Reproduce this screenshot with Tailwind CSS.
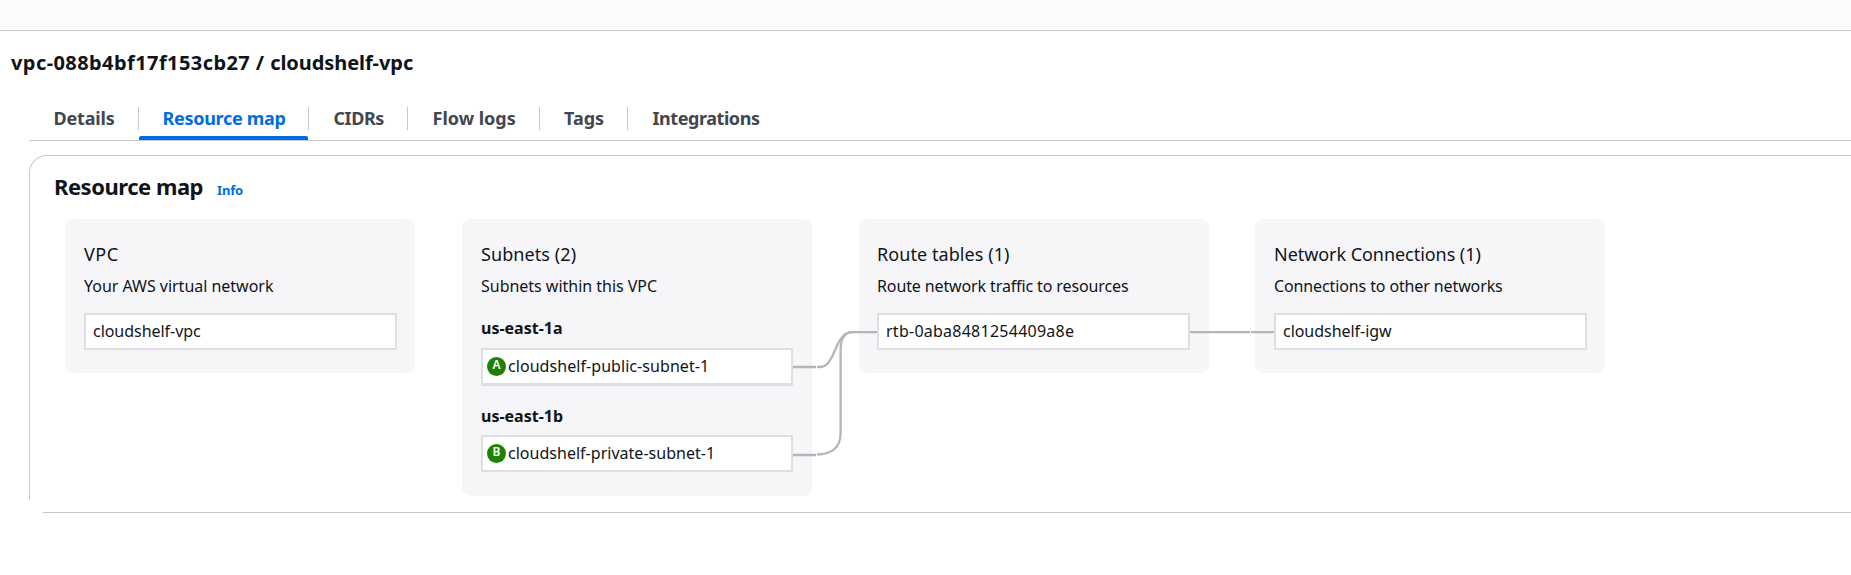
<!DOCTYPE html>
<html lang="en">
<head>
<meta charset="utf-8">
<title>VPC resource map</title>
<script src="https://cdn.jsdelivr.net/npm/@tailwindcss/browser@4"></script>
</head>
<body class="relative h-[575px] w-full overflow-hidden bg-white font-['Noto_Sans',sans-serif] text-[#0f141a]">
<div class="h-[31px] border-b border-[#c6c6cd] bg-[#fcfcfd]"></div>
<h1 class="ml-[11px] mt-[19px] whitespace-nowrap text-[20px] font-bold leading-[26px]"><span class="tracking-[0.42px]">vpc-088b4bf17f153cb27 / </span><span class="tracking-[-0.06px]">cloudshelf-vpc</span></h1>

<div class="ml-[29px]">
  <nav class="mt-[31px] flex h-[34px] whitespace-nowrap border-b border-[#c6c6cd] text-[18px] font-bold leading-[23px] text-[#424650]">
    <div class="h-[23px] w-[110px] border-r border-[#c6c6cd] pl-[24.5px] tracking-[-0.18px]">Details</div>
    <div class="h-[33px] w-[170px] text-[#006ce0]">
      <div class="h-[23px] border-r border-[#c6c6cd] pl-[23.5px] tracking-[-0.3px]">Resource map</div>
      <div class="mt-[6px] h-1 w-[169px] rounded-t-[2px] bg-[#006ce0]"></div>
    </div>
    <div class="h-[23px] w-[99px] border-r border-[#c6c6cd] pl-[24.5px] tracking-[-0.45px]">CIDRs</div>
    <div class="h-[23px] w-[132px] border-r border-[#c6c6cd] pl-[24.5px] tracking-[0px]">Flow logs</div>
    <div class="h-[23px] w-[88px] border-r border-[#c6c6cd] pl-6 tracking-[0px]">Tags</div>
    <div class="h-[23px] pl-[24.5px] tracking-[-0.44px]">Integrations</div>
  </nav>

  <section class="mt-[14px] h-[345px] rounded-tl-[18px] border-l border-t border-[#c6c6cd] pl-[35px] pt-[15px]">
    <header class="-ml-[11px] flex h-[30px] items-baseline leading-[30px]">
      <h2 class="text-[22px] font-bold tracking-[-0.48px]">Resource map</h2>
      <a class="ml-[14px] text-[13px] font-bold tracking-[-0.2px] text-[#006ce0]">Info</a>
    </header>

    <div class="mt-[18px] flex items-start gap-[47px] whitespace-nowrap text-[16px] leading-5">
      <div class="h-[154px] w-[350px] shrink-0 rounded-[9px] bg-[#f6f6f9] pl-[19px] pt-[23px]">
        <h3 class="text-[18px] leading-6 tracking-[0.5px]">VPC</h3>
        <p class="mt-[10px] tracking-[-0.02px]">Your AWS virtual network</p>
        <div class="mt-[17px] flex h-[37px] w-[313px] items-center border-2 border-[#dedee3] bg-white pb-[2px] pl-[7px] tracking-[-0.04px]">cloudshelf-vpc</div>
      </div>

      <div class="h-[277px] w-[350px] shrink-0 rounded-[9px] bg-[#f6f6f9] pl-[19px] pt-[23px]">
        <h3 class="text-[18px] leading-6 tracking-[0.08px]">Subnets (2)</h3>
        <p class="mt-[10px] tracking-[-0.02px]">Subnets within this VPC</p>
        <h4 class="mt-[22px] font-bold">us-east-1a</h4>
        <div class="mt-[10px] flex h-[38px] w-[312px] items-center border-2 border-b-[3px] border-[#dedee3] bg-white pb-px pl-1">
          <span class="flex size-[19px] items-center justify-center rounded-full bg-[#1d8102] pb-[2px] text-[12px] font-semibold leading-none text-white">A</span>
          <span class="ml-[2px] tracking-[0.06px]">cloudshelf-public-subnet-1</span>
        </div>
        <h4 class="mt-[20px] font-bold">us-east-1b</h4>
        <div class="mt-[9px] flex h-[37px] w-[312px] items-center border-2 border-[#dedee3] bg-white pb-[1px] pl-1">
          <span class="flex size-[19px] items-center justify-center rounded-full bg-[#1d8102] pb-[2px] text-[12px] font-semibold leading-none text-white">B</span>
          <span class="ml-[2px] tracking-[0.02px]">cloudshelf-private-subnet-1</span>
        </div>
      </div>

      <div class="h-[154px] w-[350px] shrink-0 rounded-[9px] bg-[#f6f6f9] pl-[18px] pt-[23px]">
        <h3 class="text-[18px] leading-6 tracking-[0.07px]">Route tables (1)</h3>
        <p class="mt-[10px] tracking-[-0.12px]">Route network traffic to resources</p>
        <div class="mt-[17px] flex h-[37px] w-[313px] items-center border-2 border-[#dedee3] bg-white pb-[2px] pl-[7px] tracking-[0.25px]">rtb-0aba8481254409a8e</div>
      </div>

      <div class="-ml-px h-[154px] w-[350px] shrink-0 rounded-[9px] bg-[#f6f6f9] pl-[19px] pt-[23px]">
        <h3 class="text-[18px] leading-6 tracking-[-0.05px]">Network Connections (1)</h3>
        <p class="mt-[10px] tracking-[-0.12px]">Connections to other networks</p>
        <div class="mt-[17px] flex h-[37px] w-[313px] items-center border-2 border-[#dedee3] bg-white pb-[2px] pl-[7px] tracking-[-0.04px]">cloudshelf-igw</div>
      </div>
    </div>
  </section>
  <div class="ml-[14px] mt-[12px] h-px bg-[#c6c6cd]"></div>
</div>

<!-- Connectors between subnets, route table and gateway -->
<svg class="pointer-events-none absolute left-0 top-0" width="1851" height="575" fill="none" stroke="#b4b4bb" stroke-width="2.3">
  <path d="M793 367H816M817 367H820C836 367 834 332.2 852 332.2H877"/>
  <path d="M793 455H816M817 454.5C832 454.5 840.6 447 840.6 433V350C840.6 339 845 332.2 853 332.2"/>
  <path d="M1190 332.1H1250M1251 332.1H1274"/>
</svg>
</body>
</html>
